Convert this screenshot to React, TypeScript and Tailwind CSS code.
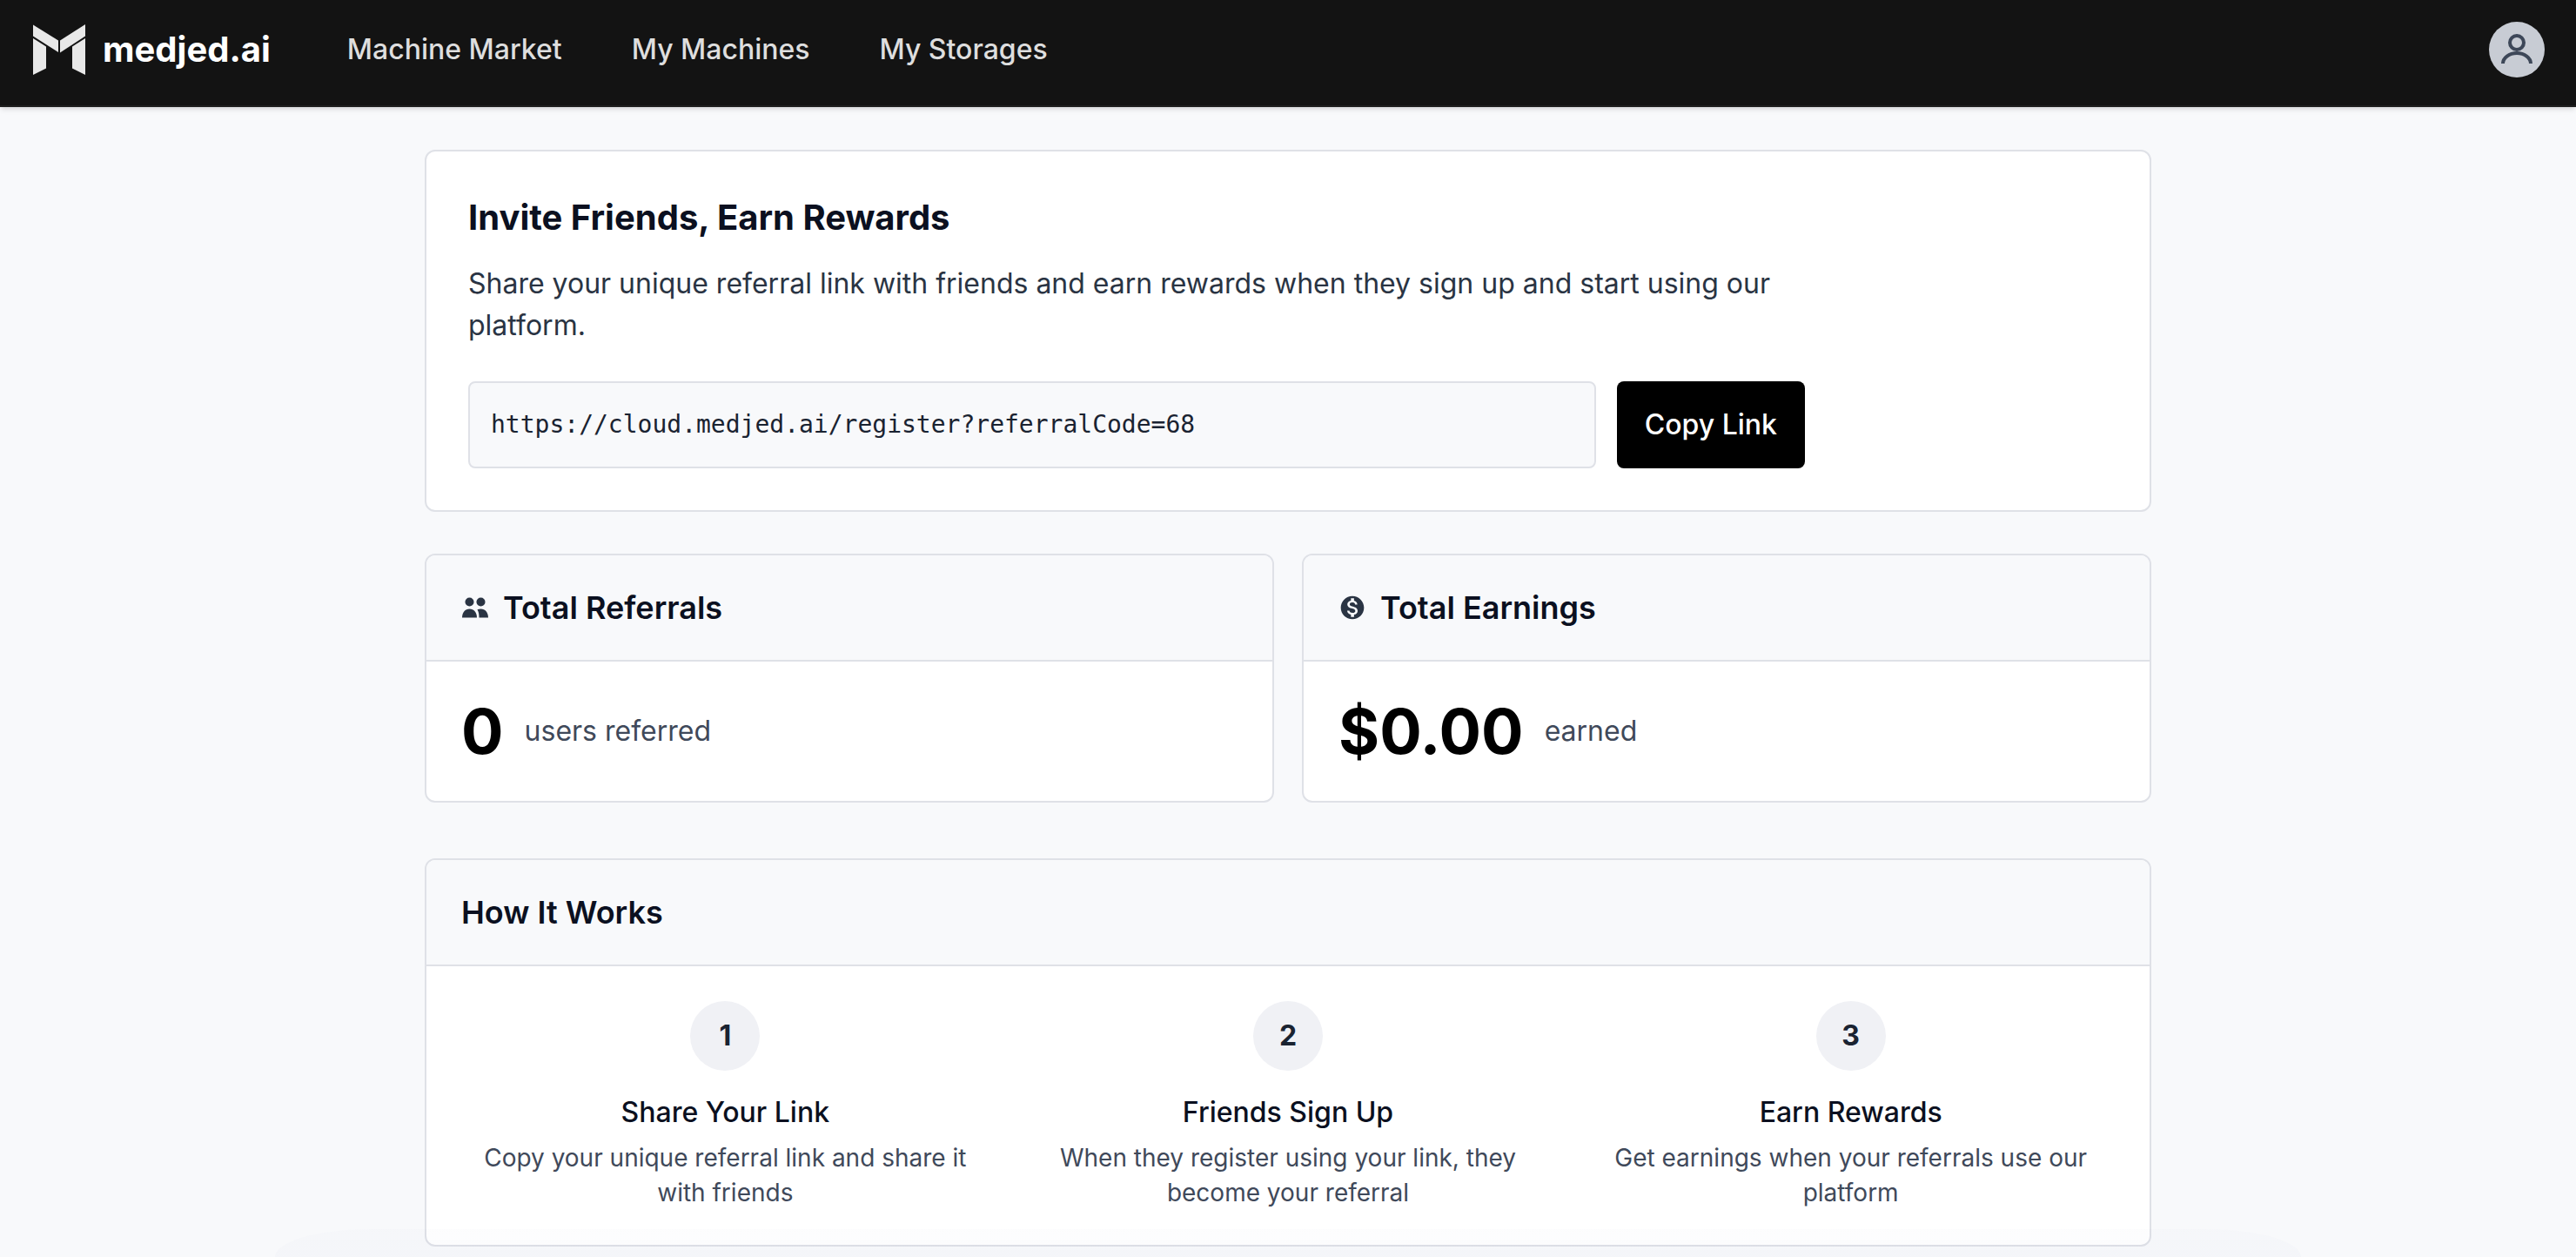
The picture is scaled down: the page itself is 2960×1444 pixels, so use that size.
import React, { useState } from 'react';
import { MdMonetizationOn } from 'react-icons/md';

const REFERRAL_LINK = 'https://cloud.medjed.ai/register?referralCode=68';

const NAV_LINKS = ['Machine Market', 'My Machines', 'My Storages'];

const STEPS = [
  { title: 'Share Your Link', text: 'Copy your unique referral link and share it with friends' },
  { title: 'Friends Sign Up', text: 'When they register using your link, they become your referral' },
  { title: 'Earn Rewards', text: 'Get earnings when your referrals use our platform' },
];

const Logo = () => (
  <svg viewBox="0 0 60 58" className="w-[60px] h-[58px]" fill="#e8e8e8" aria-hidden="true">
    <path d="M0 0.5 29 18.5V32L0 13.5Z" />
    <path d="M60 0 31 18.5V32.5L60 13.5Z" />
    <path d="M0 16 15 25.500V50.500L0 58Z" />
    <path d="M60 16 45 25.500V50.500L60 58Z" />
  </svg>
);

const UserIcon = () => (
  <svg viewBox="0 0 64 64" className="w-16 h-16" fill="none" stroke="#3d4758" strokeWidth="4" aria-hidden="true">
    <circle cx="32" cy="24" r="8" />
    <path d="M16 48c0-6.600 7.200-12 16-12s16 5.400 16 12" />
  </svg>
);

const PeopleIcon = () => (
  <svg viewBox="0 0 32 32" className="w-8 h-8" fill="currentColor" aria-hidden="true">
    <circle cx="9.500" cy="9.500" r="5" />
    <circle cx="22.500" cy="9.500" r="5" />
    <path d="M1 27.500C1 21.500 4.500 17.500 9.500 17.500S18 21.500 18 27.500Z" />
    <path d="M18.500 18.300C19.700 17.700 21 17.500 22.500 17.500 27.500 17.500 31 21.500 31 27.500H20.500C20.500 23.500 20 20.800 18.500 18.300Z" />
  </svg>
);

const Header = () => (
  <header className="bg-[#131313] border-b-2 border-[#1e1e1e] shadow-md pt-[25px] pb-8 px-9 flex items-center">
    <a href="#" className="flex items-center gap-5 text-[40px] leading-[48px] font-bold text-white pl-[2px]">
      <Logo />
      medjed.ai
    </a>
    <nav className="flex items-center gap-20 pl-[88px]">
      {NAV_LINKS.map(label => (
        <a key={label} href="#" className="text-[32px] leading-[48px] text-[#dedede] font-medium">{label}</a>
      ))}
    </nav>
    <button aria-label="Account" className="ml-auto w-16 h-16 rounded-full bg-[#c8ccd4]">
      <UserIcon />
    </button>
  </header>
);

const Panel = ({ title, icon, children }: { title: string, icon?: React.ReactNode, children: React.ReactNode }) => (
  <section className="bg-white border-2 border-[#dfe1e7] rounded-xl overflow-hidden">
    <div className="px-10 py-8 bg-[#f8f9fb] border-b-2 border-[#dfe1e7] flex items-center gap-4 text-[#2a3443]">
      {icon}
      <h2 className="text-4xl leading-[56px] font-semibold text-[#0b1020]">{title}</h2>
    </div>
    <div className="p-10">{children}</div>
  </section>
);

const Stat = ({ value, label }: { value: string, label: string }) => (
  <p className="flex items-center gap-6">
    <span className="text-7xl leading-[80px] font-bold text-black">{value}</span>
    <span className="text-[32px] leading-[48px] text-[#3f495a]">{label}</span>
  </p>
);

const InviteCard = () => {
  const [copied, setCopied] = useState(false);

  const copyLink = async () => {
    await navigator.clipboard.writeText(REFERRAL_LINK);
    setCopied(true);
    setTimeout(() => setCopied(false), 2000);
  };

  return (
    <section className="bg-white border-2 border-[#dfe1e7] rounded-xl p-12">
      <div className="max-w-[1536px]">
        <h1 className="text-[40px] leading-[56px] font-bold text-[#0b1020]">Invite Friends, Earn Rewards</h1>
        <p className="mt-6 text-[32px] leading-[48px] text-[#2a3443]">
          Share your unique referral link with friends and earn rewards when they sign up and start using our platform.
        </p>
        <div className="mt-10 flex gap-6">
          <input
            readOnly
            aria-label="Referral link"
            value={REFERRAL_LINK}
            className="flex-1 min-w-0 p-6 bg-[#f8f9fb] border-2 border-[#dfe1e7] rounded-lg font-['DejaVu_Sans_Mono',monospace] text-[28px] leading-[48px] text-[#1a2331]"
          />
          <button onClick={copyLink} className="px-8 bg-black rounded-lg text-[32px] leading-[48px] font-medium text-white whitespace-nowrap">
            {copied ? 'Copied!' : 'Copy Link'}
          </button>
        </div>
      </div>
    </section>
  );
};

const App: React.FC = () => {
  return (
    <div className="min-h-screen bg-[#f8f9fb] font-['Inter',sans-serif] overflow-hidden">
      <Header />

      <main className="w-full max-w-[1984px] mx-auto pt-[49px] pb-3">
        <InviteCard />

        {/* Referral stats */}
        <div className="mt-12 grid grid-cols-2 gap-8">
          <Panel title="Total Referrals" icon={<PeopleIcon />}>
            <Stat value="0" label="users referred" />
          </Panel>
          <Panel title="Total Earnings" icon={<MdMonetizationOn className="w-8 h-8" />}>
            <Stat value="$0.00" label="earned" />
          </Panel>
        </div>

        <div className="mt-16">
          <Panel title="How It Works">
            <ol className="grid grid-cols-3 gap-10">
              {STEPS.map((step, i) => (
                <li key={step.title} className="flex flex-col items-center text-center">
                  <span className="w-20 h-20 rounded-full bg-[#f0f1f5] flex items-center justify-center text-[32px] leading-[48px] font-bold text-[#1a2331]">
                    {i + 1}
                  </span>
                  <h3 className="mt-6 text-[32px] leading-[48px] font-medium text-[#0b1020]">{step.title}</h3>
                  <p className="mt-2 text-[28px] leading-10 text-[#3f495a]">{step.text}</p>
                </li>
              ))}
            </ol>
          </Panel>
        </div>
      </main>

      {/* Soft glow along the bottom edge */}
      <div className="fixed bottom-0 inset-x-[316px] h-8 rounded-t-[110px_32px] bg-linear-to-t from-[#3b4fa0]/2 to-[#3b4fa0]/1 pointer-events-none"></div>
    </div>
  );
};

export default App;
